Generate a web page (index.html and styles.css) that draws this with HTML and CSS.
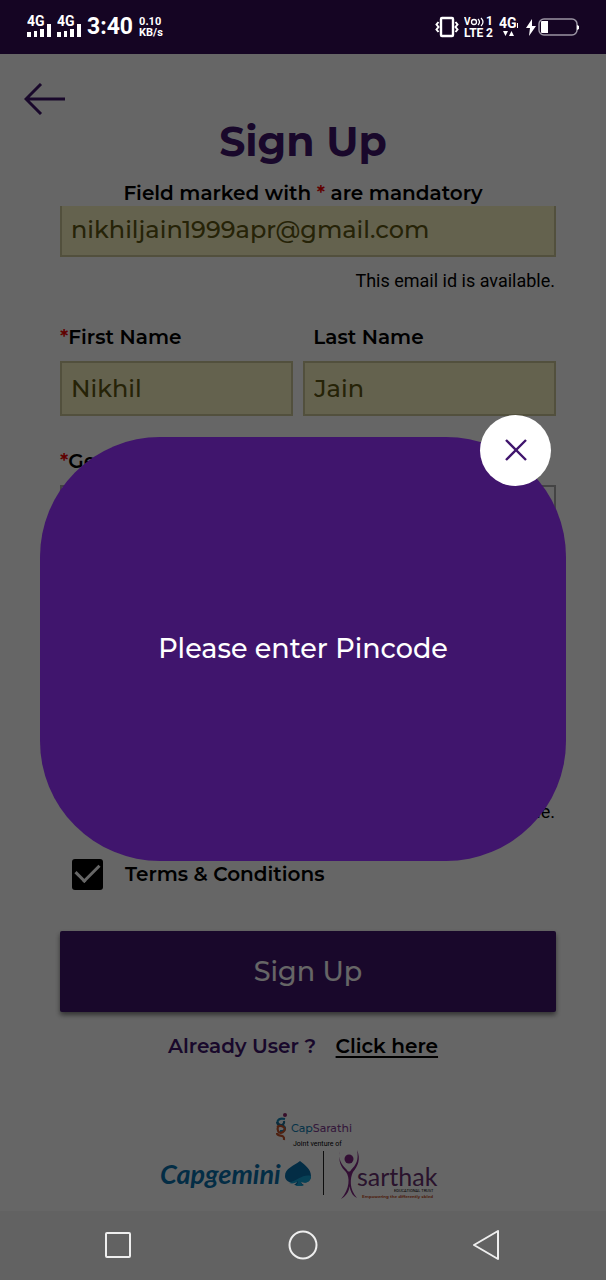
FILE: index.html
```html
<!DOCTYPE html>
<html lang="en">
  <head>
    <meta charset="UTF-8" />
    <meta name="viewport" content="width=device-width, initial-scale=1.0" />
    <title>Sign Up</title>
    <link rel="stylesheet" href="styles.css">
  </head>
  <body>
    <div class="status-bar">
      <div class="status-group">
        <svg class="signal" width="24" height="24" viewBox="0 0 24 24">
          <text x="0" y="11">4G</text>
          <path d="M0 17h4v5H0zM7 16h3v6H7zM13 14h4v8h-4zM20 9h4v13h-4z" />
        </svg>
        <svg class="signal" width="24" height="24" viewBox="0 0 24 24">
          <text x="0" y="11">4G</text>
          <path d="M0 17h4v5H0zM7 16h3v6H7zM13 14h4v8h-4zM20 9h4v13h-4z" />
        </svg>
        <span class="time">3:40</span>
        <span class="speed">0.10<br>KB/s</span>
      </div>
      <div class="status-group tight">
        <svg width="24" height="24" viewBox="0 0 24 24" fill="none" stroke="#fff">
          <rect x="6" y="3" width="12" height="18" rx="1" stroke-width="2.4" />
          <path d="M3.500 7l-2 2.500 2 2.500-2 2.500 2 2.500M20.500 7l2 2.500-2 2.500 2 2.500-2 2.500" stroke-width="2" />
        </svg>
        <svg class="volte" width="30" height="28" viewBox="0 0 30 28">
          <text x="0" y="12" font-size="10">V</text>
          <circle cx="10" cy="9" r="2.500" fill="none" stroke="#fff" stroke-width="1.300" />
          <path d="M14 6q3 3 0 6M17 5q4 4 0 8" fill="none" stroke="#fff" stroke-width="1.200" />
          <text x="22" y="12" font-size="12">1</text>
          <text x="0" y="24" font-size="12">LTE</text>
          <text x="22" y="24" font-size="12">2</text>
        </svg>
        <svg class="signal" width="21" height="24" viewBox="0 0 21 24">
          <text x="0" y="13">4G</text>
          <path d="M18 8h1v5h-1zM4 16h5l-2.500 5zM10 21l2.500-5 2.500 5z" />
        </svg>
        <svg class="battery" width="54" height="24" viewBox="0 0 54 24">
          <path d="M7 4L1 13h4l-1 8 7-10H7z" fill="#fff" />
          <rect x="14" y="4" width="38" height="16" rx="5" fill="none" stroke="#9a94a3" stroke-width="1.500" />
          <path d="M17 6h6v12h-6q-1 0-1-1V7q0-1 1-1zM52 10l2 1v3l-2 1z" fill="#fff" />
        </svg>
      </div>
    </div>

    <div class="screen">
      <header class="header">
        <button class="back" type="button" aria-label="Back">
          <svg width="42" height="32" viewBox="0 0 42 32">
            <path d="M41 16H2M17 1L2 16l15 15" fill="none" stroke="#40156d" stroke-width="3" />
          </svg>
        </button>
        <h1 class="title">Sign Up</h1>
        <p class="note">Field marked with <span class="required">*</span> are mandatory</p>
      </header>

      <form class="form">
        <div class="field">
          <input class="input email" type="email" aria-label="Email" value="nikhiljain1999apr@gmail.com">
          <p class="hint">This email id is available.</p>
        </div>
        <div class="row">
          <div class="field first">
            <label for="firstName"><span class="required">*</span>First Name</label>
            <input class="input" id="firstName" type="text" value="Nikhil">
          </div>
          <div class="field last">
            <label for="lastName">Last Name</label>
            <input class="input" id="lastName" type="text" value="Jain">
          </div>
        </div>
        <div class="field">
          <label for="gender"><span class="required">*</span>Gender</label>
          <select class="input empty" id="gender"><option></option></select>
        </div>
        <div class="field">
          <label for="pincode"><span class="required">*</span>Pincode</label>
          <input class="input empty" id="pincode" type="text">
        </div>
        <div class="field">
          <label for="mobile"><span class="required">*</span>Mobile</label>
          <input class="input empty" id="mobile" type="text">
          <p class="hint">This mobile is available.</p>
        </div>
        <div class="terms">
          <input class="check" id="terms" type="checkbox" checked>
          <label for="terms">Terms &amp; Conditions</label>
        </div>
        <button class="submit" type="submit">Sign Up</button>
      </form>

      <p class="login">Already User ? <a href="#">Click here</a></p>

      <div class="logos">
        <svg width="286" height="90" viewBox="0 0 286 90">
          <!-- CapSarathi -->
          <g fill="none" stroke-width="2.200">
            <path d="M125 8c-8-2-10 5-4 6s5 7-1 6" stroke="#1583b5" />
            <path d="M117 11c1 5 8 4 7-1" stroke="#1f6f96" />
            <path d="M117 16c5-3 11 2 6 5s-6-3-5-5M117 22c0 5 8 0 7 7" stroke="#c4532b" />
          </g>
          <circle cx="125" cy="4" r="2" fill="#8a2369" />
          <text x="131" y="21" class="cap-sarathi"><tspan fill="#1583b5">Cap</tspan><tspan fill="#833e93">Sarathi</tspan></text>
          <text x="133" y="35" class="venture">Joint venture of</text>
          <!-- Capgemini -->
          <text x="0" y="73" class="capgemini">Capgemini</text>
          <path d="M140 50c5 4 11 8 11 15 0 6-6 8-10 5 0 2 1 3 3 4h-10c2-1 3-3 3-4-5 3-12 1-12-5 0-8 9-10 15-15z" fill="#0870ad" />
          <path d="M151 65c-8-2-13 4-22 7 4 1 7 0 9-2 0 3-1 4-3 5h9c-2-1-3-2-3-4 5 2 10 0 10-6z" fill="#13a4d8" />
          <path d="M163.500 40v44" stroke="#222" stroke-width="1" />
          <!-- Sarthak -->
          <path d="M180 40c-2 11 1 16 6 21 4 5 4 17-5 27 9-5 10-14 8-23 0 10 1 19 8 22-8-9-7-20-4-26 5-6 8-13 4-22 2 10-1 15-6 20-1 2-3 2-4 0-6-6-9-11-7-19z" fill="#802683" />
          <circle cx="189" cy="48" r="4.500" fill="#802683" />
          <text x="197" y="75" class="sarthak">sarthak</text>
          <text x="234" y="81" class="trust">EDUCATIONAL TRUST</text>
          <text x="202" y="87" class="motto">Empowering the differently abled</text>
        </svg>
      </div>

      <div class="overlay">
        <div class="dialog" role="alertdialog" aria-labelledby="message">
          <p id="message">Please enter Pincode</p>
          <button class="close" type="button" aria-label="Close">
            <svg width="24" height="24" viewBox="0 0 24 24">
              <path d="M2 2l20 20M22 2L2 22" stroke="#40156d" stroke-width="2.400" />
            </svg>
          </button>
        </div>
      </div>
    </div>

    <nav class="nav-bar">
      <button type="button" aria-label="Recent apps">
        <svg width="30" height="30" viewBox="0 0 30 30"><rect x="3" y="3" width="24" height="24" rx="1" /></svg>
      </button>
      <button type="button" aria-label="Home">
        <svg width="30" height="30" viewBox="0 0 30 30"><circle cx="15" cy="15" r="13.500" /></svg>
      </button>
      <button type="button" aria-label="Back">
        <svg width="30" height="30" viewBox="0 0 30 30"><path d="M2 15L26 1v28z" stroke-linejoin="round" /></svg>
      </button>
    </nav>
  </body>
</html>
```
FILE: styles.css
```css
* {
  box-sizing: border-box;
  margin: 0;
  padding: 0;
}
body {
  display: flex;
  flex-direction: column;
  min-height: 100vh;
  background: #fff;
  color: #000;
  font-family: Montserrat, Inter, sans-serif;
  font-size: 20px;
  font-weight: 600;
  line-height: 24px;
}
button {
  background: none;
  border: 0;
  font: inherit;
}
svg {
  display: block;
}

/* status bar */
.status-bar {
  align-items: center;
  background: #150523;
  color: #fff;
  display: flex;
  font-family: Roboto, sans-serif;
  font-weight: 700;
  height: 54px;
  justify-content: space-between;
  padding: 0 27px;
}
.status-group {
  align-items: center;
  display: flex;
  gap: 6px;
}
.tight {
  gap: 5px;
}
.signal,
.volte {
  fill: #fff;
  font-size: 14px;
}
.time {
  font-size: 23px;
}
.speed {
  font-size: 11px;
  line-height: 11px;
}

/* page */
.screen {
  flex: 1;
  position: relative;
}
.header {
  padding-top: 29px;
  text-align: center;
}
.back {
  display: block;
  margin: 0 0 6px 24px;
}
.title {
  color: #40156d;
  font-size: 41px;
  font-weight: 700;
  line-height: 40px;
}
.note {
  margin: 20px 0 1px;
}
.required {
  color: #f00000;
}
.form {
  display: flex;
  flex-direction: column;
  gap: 33px;
  padding: 0 50px 0 60px;
}
.row {
  display: flex;
  gap: 10px;
}
.field {
  display: flex;
  flex-direction: column;
  gap: 12px;
}
.first {
  flex: 12;
}
.last {
  flex: 13;
}
.last label {
  padding-left: 10px;
}
.input {
  background: #faf6c2;
  border: 2px solid #cdc998;
  color: #5f5713;
  font: inherit;
  font-size: 24px;
  font-weight: 500;
  height: 55px;
  padding: 0 9px;
  width: 100%;
}
.email {
  border-top: 0;
  height: 51px;
  padding-bottom: 2px;
}
.empty {
  appearance: none;
  background: #fff;
  border-color: #aaa;
}
.hint {
  font-family: Roboto, sans-serif;
  font-size: 18px;
  font-weight: 400;
  line-height: 23px;
  padding-right: 1px;
  text-align: right;
}
.terms {
  align-items: center;
  display: flex;
  gap: 22px;
  height: 36px;
  padding-left: 12px;
}
.check {
  appearance: none;
  background: #000;
  border-radius: 3px;
  display: grid;
  height: 31px;
  place-items: center;
  width: 31px;
}
.check:checked::before {
  border: solid #fff;
  border-width: 0 0 3px 3px;
  content: "";
  height: 11px;
  margin-bottom: 8px;
  transform: rotate(-45deg);
  width: 20px;
}
.submit {
  background: #40156d;
  border-radius: 2px;
  box-shadow: 0 3px 5px rgba(0, 0, 0, 0.5);
  color: #fff;
  font-size: 27px;
  font-weight: 500;
  height: 81px;
  margin-top: 6px;
}
.login {
  color: #40156d;
  margin-top: 22px;
  text-align: center;
}
.login a {
  color: #000;
  margin-left: 14px;
  text-underline-offset: 3px;
}
.logos {
  display: flex;
  justify-content: center;
  margin: 53px 0 9px;
}
.cap-sarathi {
  font-size: 11px;
  font-weight: 500;
}
.venture {
  font-family: Roboto, sans-serif;
  font-size: 7px;
  font-weight: 400;
}
.capgemini {
  fill: #0870ad;
  font-family: Lato, sans-serif;
  font-size: 27px;
  font-style: italic;
  font-weight: 700;
}
.sarthak {
  fill: #693170;
  font-family: Lato, sans-serif;
  font-size: 25px;
  font-weight: 400;
}
.trust {
  font-family: Roboto, sans-serif;
  font-size: 4px;
  font-weight: 400;
}
.motto {
  fill: #c4532b;
  font-size: 4px;
  font-weight: 700;
}

/* dialog */
.overlay {
  align-items: center;
  background: rgba(0, 0, 0, 0.6);
  display: flex;
  inset: 0;
  padding: 32px 40px 0;
  position: absolute;
}
.dialog {
  align-items: center;
  background: #40156d;
  border-radius: 120px;
  color: #fff;
  display: flex;
  flex: 1;
  font-size: 27px;
  font-weight: 500;
  height: 424px;
  justify-content: center;
  position: relative;
}
.close {
  align-items: center;
  background: #fff;
  border-radius: 50%;
  display: flex;
  height: 71px;
  justify-content: center;
  position: absolute;
  right: 15px;
  top: -22px;
  width: 71px;
}

/* navigation bar */
.nav-bar {
  align-items: center;
  background: #626262;
  display: flex;
  height: 69px;
  justify-content: space-between;
  padding: 0 104px 2px 103px;
}
.nav-bar svg {
  fill: none;
  stroke: #eee;
  stroke-width: 2;
}
```
